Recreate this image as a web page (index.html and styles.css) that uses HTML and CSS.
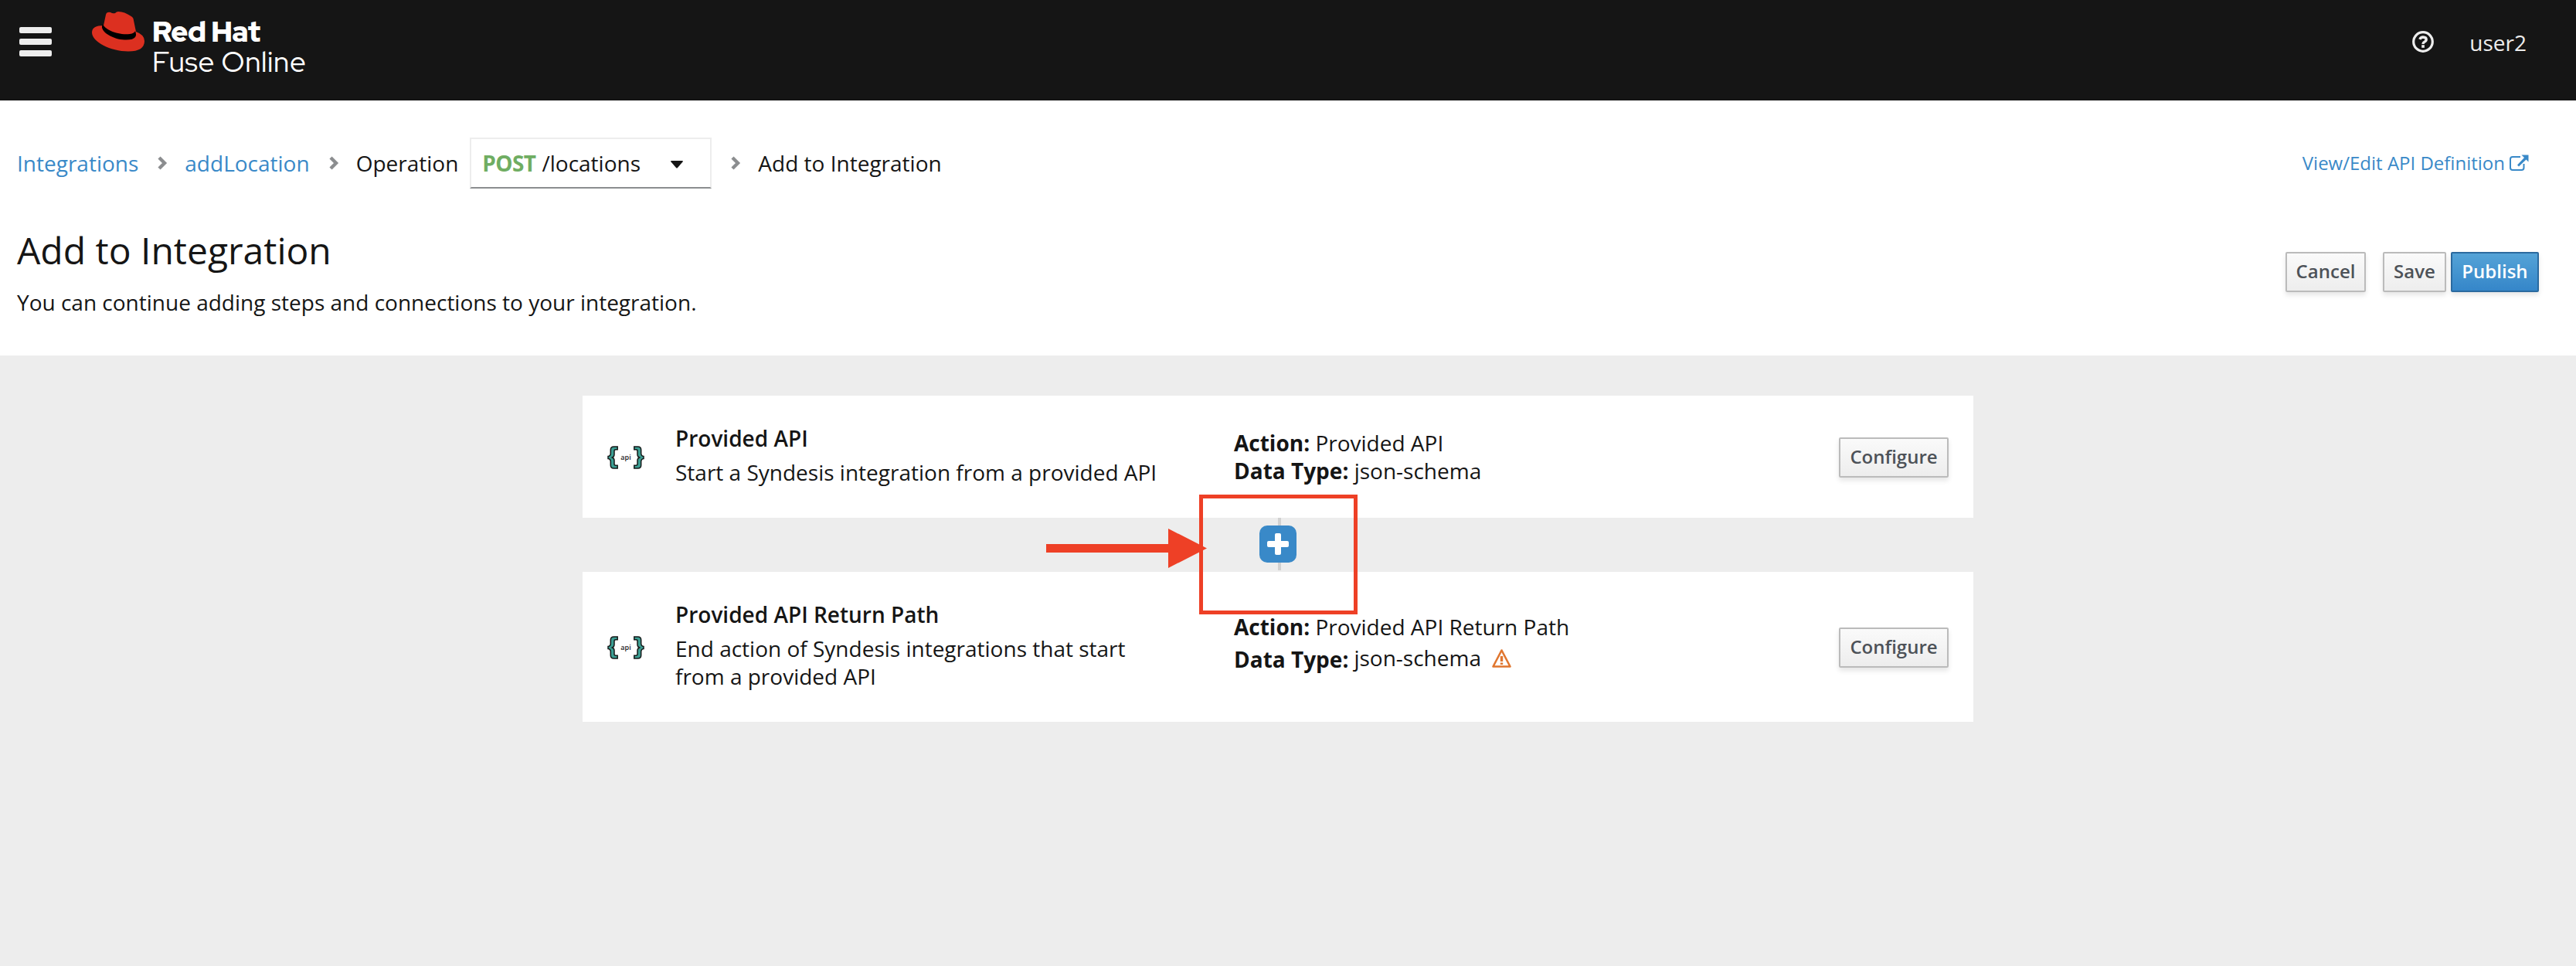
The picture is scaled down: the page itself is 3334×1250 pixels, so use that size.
FILE: index.html
```html
<!DOCTYPE html>
<html lang="en">
<head>
<meta charset="utf-8">
<title>Add to Integration</title>
<link rel="stylesheet" href="styles.css">
</head>
<body>
<svg class="defs" width="0" height="0" aria-hidden="true">
  <symbol id="chevron" viewBox="0 0 14 20"><path d="M3 3l7 7-7 7" fill="none" stroke="#8b8d8f" stroke-width="4.4"/></symbol>
  <symbol id="braces" viewBox="0 0 48 30">
    <g fill="#3c9e93" stroke="#151a1a" stroke-width="1.500" stroke-linejoin="miter">
      <path d="M13.200 1H8.500Q4.300 1 4.300 5V9.500Q4.300 13 1 13.500V16.500Q4.300 17 4.300 20.500V25Q4.300 29 8.500 29H13.200V25.200H11Q9 25.200 9 23.500V19Q9 16 6.500 15Q9 14 9 11V6.500Q9 4.800 11 4.800H13.200Z"/>
      <path d="M34.800 1H39.500Q43.700 1 43.700 5V9.500Q43.700 13 47 13.500V16.500Q43.700 17 43.700 20.500V25Q43.700 29 39.500 29H34.800V25.200H37Q39 25.200 39 23.500V19Q39 16 41.500 15Q39 14 39 11V6.500Q39 4.800 37 4.800H34.800Z"/>
    </g>
  </symbol>
</svg>

<header class="masthead">
  <div class="burger"><i></i><i></i><i></i></div>
  <div class="brand">
    <svg class="hat" width="70" height="54" viewBox="0 0 70 54">
      <path fill="#dc3020" d="M16 19Q1 19 1 28C1 40 25 52.500 48 52.500Q69 52.500 69 39Q69 31 58 27L54.500 10Q54 8 50 6C46 3.500 41 1 35 1Q33 1 31 3Q28 4 25 2Q20 1 19 5Z"/>
      <path fill="#000" d="M15 17C17 24 35 32 50 30Q56 29 57 26Q59 31 57 34Q54 38 43 37.500C29 37 13 28 14 20Z"/>
    </svg>
    <div class="wordmark"><b>Red Hat</b><span>Fuse Online</span></div>
  </div>
  <div class="tools">
    <svg class="help" width="28" height="28" viewBox="0 0 28 28"><circle cx="14" cy="14" r="12.300" fill="none" stroke="#ededed" stroke-width="3.200"/><path d="M9.800 10.800Q11 8 14 8Q18.200 8.200 18.200 11.200Q18.200 13 15.800 14.200Q14 15 14 17" fill="none" stroke="#ededed" stroke-width="3.400"/><rect x="12.200" y="18.200" width="3.700" height="3.600" fill="#ededed"/></svg>
    <span>user2</span>
  </div>
</header>

<section class="page-head">
  <div class="crumb-row">
    <nav class="crumbs">
      <a>Integrations</a><svg class="chev"><use href="#chevron"/></svg>
      <a>addLocation</a><svg class="chev"><use href="#chevron"/></svg>
      <span>Operation</span>
      <div class="select"><b>POST</b><span>/locations</span><svg class="caret" width="16" height="10" viewBox="0 0 16 10"><path d="M1 0H15Q16.500 0 15.500 1.500L9 9Q8 10 7 9L.5 1.500Q-.5 0 1 0Z" fill="#151515"/></svg></div>
      <svg class="chev last"><use href="#chevron"/></svg>
      <span>Add to Integration</span>
    </nav>
    <a class="api-link"><span>View/Edit API Definition</span>
      <svg width="25" height="22" viewBox="0 0 25 22"><path d="M14 3H4Q1 3 1 6V17Q1 20 4 20H15.500Q18.500 20 18.500 17V12" fill="none" stroke="#3989c8" stroke-width="2"/><path d="M15.500 .5H24.500V9.500L21.500 6.500L12 15.500L10 13.500L19 4Z" fill="#3989c8"/></svg>
    </a>
  </div>
  <div class="title-row">
    <div>
      <h1>Add to Integration</h1>
      <p>You can continue adding steps and connections to your integration.</p>
    </div>
    <div class="actions">
      <button class="btn cancel">Cancel</button>
      <button class="btn save">Save</button>
      <button class="btn primary">Publish</button>
    </div>
  </div>
</section>

<main class="steps">
  <article class="card">
    <svg class="step-icon" viewBox="0 0 48 30"><use href="#braces"/><text x="24" y="17.500" class="api-text" text-anchor="middle">api</text></svg>
    <div class="desc"><h2>Provided API</h2><p>Start a Syndesis integration from a provided API</p></div>
    <div class="meta"><div><b>Action:</b> Provided API</div><div><b>Data Type:</b> json-schema</div></div>
    <button class="btn configure">Configure</button>
  </article>
  <div class="joint">
    <button class="add" aria-label="Add step"><svg width="28" height="28" viewBox="0 0 28 28"><rect x="10" width="8" height="28" rx="2" fill="#fff"/><rect y="10" width="28" height="8" rx="2" fill="#fff"/></svg></button>
    <div class="callout"></div>
    <svg class="arrow" width="208" height="52" viewBox="0 0 208 52"><path d="M0 20H158V0L208 25.500L158 51V31H0Z" fill="#ee4026"/></svg>
  </div>
  <article class="card second">
    <svg class="step-icon" viewBox="0 0 48 30"><use href="#braces"/><text x="24" y="17.500" class="api-text" text-anchor="middle">api</text></svg>
    <div class="desc"><h2>Provided API Return Path</h2><p>End action of Syndesis integrations that start<br>from a provided API</p></div>
    <div class="meta"><div><b>Action:</b> Provided API Return Path</div>
      <div class="typed"><b>Data Type:</b><span>json-schema</span>
      <svg class="warn" width="25" height="24" viewBox="0 0 25 24"><path d="M12.500 1.500L23.500 22.500H1.500Z" fill="none" stroke="#e0762f" stroke-width="2.600" stroke-linejoin="round"/><path d="M12.500 9V16M12.500 17.500V20" stroke="#e0762f" stroke-width="3.400"/></svg></div>
    </div>
    <button class="btn configure">Configure</button>
  </article>
</main>
</body>
</html>
```
FILE: styles.css
```css
* { box-sizing: border-box; }
body {
  margin: 0;
  min-height: 1250px;
  background: #ededed;
  color: #151515;
  font: 28px/36px "Open Sans", sans-serif;
}
h1, h2, p { margin: 0; }
svg { display: block; flex: none; }
.defs { position: absolute; }
a { color: #3989c8; }

.masthead {
  height: 130px;
  background: #151515;
  color: #ededed;
  display: flex;
  align-items: flex-start;
  padding: 0 64px 0 25px;
}
.burger { display: flex; flex-direction: column; gap: 7px; margin-top: 35px; width: 42px; }
.burger i { height: 8px; border-radius: 2px; background: #ededed; }
.brand { display: flex; margin-left: 51px; }
.hat { margin-top: 14px; }
.wordmark { display: flex; flex-direction: column; margin: 21px 0 0 9px; color: #fff; line-height: 39px; font-family: "Red Hat Display", "Lato", sans-serif; white-space: nowrap; }
.wordmark b { font-size: 37px; font-weight: 900; letter-spacing: -.4px; }
.wordmark span { font-size: 37px; letter-spacing: .6px; }
.tools { display: flex; margin-left: auto; padding-top: 37px; gap: 46px; }
.help { margin-top: 3px; }

.page-head { height: 330px; background: #fff; padding: 48px 48px 0 22px; }
.crumb-row { display: flex; justify-content: space-between; align-items: center; height: 66px; }
.crumbs { display: flex; align-items: center; white-space: nowrap; }
.chev { width: 14px; height: 20px; margin: 0 22px 0 24px; }
.select {
  display: flex;
  align-items: center;
  width: 313px;
  height: 66px;
  margin-left: 15px;
  padding-left: 14px;
  border: 2px solid #ededed;
  border-bottom-color: #8b8d8f;
}
.select b { color: #6fad62; font-weight: 700; letter-spacing: -.6px; margin-right: 8px; }
.caret { margin-left: 39px; margin-top: 4px; }
.api-link { display: flex; gap: 6px; padding-right: 13px; font-size: 24px; }
.api-link svg { margin-top: 7px; }
.title-row { display: flex; justify-content: space-between; padding-top: 52px; }
h1 { font-size: 48px; font-weight: 400; line-height: 56px; }
.title-row p { margin-top: 21px; }
.actions { display: flex; margin-top: 30px; }
.btn {
  height: 52px;
  padding: 0 0 2px;
  border: 2px solid #bbb;
  border-radius: 2px;
  background: linear-gradient(#fafafa, #ededed);
  box-shadow: 0 4px 6px rgba(3, 3, 3, .1);
  color: #4d5258;
  font: 600 24px/40px "Open Sans", sans-serif;
}
.cancel { width: 104px; margin-right: 22px; }
.save { width: 82px; margin-right: 6px; }
.primary { width: 114px; border-color: #2b6a9f; background: linear-gradient(#54a3d7, #3586c9); color: #fff; }

.steps { width: 1800px; margin: 50px 0 0 754px; }
.card {
  display: flex;
  align-items: center;
  height: 162px;
  padding: 0 32px;
  border: solid #ededed;
  border-width: 2px 0;
  border-radius: 2px;
  background: #fff;
  white-space: nowrap;
}
.second { height: 198px; }
.step-icon { width: 48px; height: 30px; margin-top: 2px; }
.api-text { font: 600 9px "Open Sans", sans-serif; fill: #222; }
.desc { margin-left: 40px; width: 723px; padding-bottom: 4px; }
h2 { font-size: 28px; font-weight: 600; line-height: 36px; margin-bottom: 8px; }
.second .meta { padding-bottom: 10px; }
.typed { display: flex; margin-top: 4px; }
.typed b { margin: 2px 7px 0 0; }
.warn { margin: 7px 0 0 14px; }
.configure { width: 142px; margin: 2px 0 0 auto; }

.joint { position: relative; height: 66px; display: flex; justify-content: center; align-items: flex-start; padding-top: 8px; }
.joint::before { content: ""; position: absolute; left: 900px; top: -2px; width: 4px; height: 68px; background: #d1d1d1; }
.add { position: relative; width: 48px; height: 48px; padding: 10px; border: 0; border-radius: 10px; background: #3989c8; }
.callout { position: absolute; left: 798px; top: -32px; width: 205px; height: 155px; border: 5px solid #ee4026; }
.arrow { position: absolute; left: 600px; top: 12px; }
```
